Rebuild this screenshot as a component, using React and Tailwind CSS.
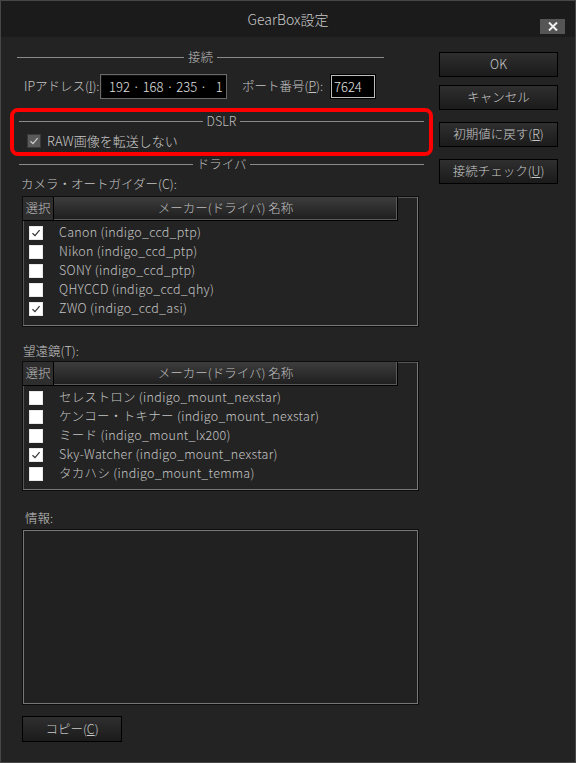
import React from "react";

const font = { fontFamily: '"Noto Sans CJK JP", "Noto Sans", sans-serif' };

const Heading = ({ label, className = "" }) => (
  <div className={`flex h-[16px] items-center ${className}`}>
    <div className="h-px flex-1 bg-[#8a8a8a]" />
    <span className="whitespace-nowrap px-[4px] text-[12.5px] font-light leading-none text-[#bdbdbd]">{label}</span>
    <div className="h-px flex-1 bg-[#8a8a8a]" />
  </div>
);

const Check = ({ checked, disabled }) => (
  <div
    className={`flex h-[14px] w-[14px] shrink-0 items-center justify-center border ${
      disabled ? "border-[#3a3a3a] bg-[#5a5a5a]" : "border-[#e8e8e8] bg-white"
    }`}
  >
    {checked && (
      <svg width="10" height="10" viewBox="0 0 10 10">
        <path d="M1.5 5.2 L4 7.6 L8.6 2.2" fill="none" stroke={disabled ? "#cfcfcf" : "#333"} strokeWidth="1.2" />
      </svg>
    )}
  </div>
);

const Btn = ({ children, className = "" }) => (
  <div
    className={`flex h-[25px] items-center justify-center whitespace-nowrap border border-black bg-gradient-to-b from-[#2f2f2f] to-[#1b1b1b] text-[12.5px] font-light text-[#c8c8c8] ${className}`}
  >
    {children}
  </div>
);

const DriverTable = ({ rows, className = "" }) => (
  <div className={`ml-[21px] w-[397px] border border-[#0d0d0d] shadow-[inset_-1px_-1px_0_#777,inset_1px_1px_0_#555] ${className}`}>
    <div className="flex h-[24px]">
      <div className="flex w-[31px] items-center justify-center border-r border-b border-black bg-[#2e2e2e] text-[12.5px] font-light text-[#bdbdbd]">
        選択
      </div>
      <div className="flex w-[344px] items-center justify-center border-r border-b border-black bg-gradient-to-b from-[#3d3d3d] to-[#1e1e1e] text-[12.5px] font-light text-[#bdbdbd] shadow-[inset_-1px_-1px_0_#5a5a5a]">
        メーカー(ドライバ) 名称
      </div>
    </div>
    <div className="pt-[2px]">
      {rows.map((r) => (
        <div key={r.name} className="flex h-[19px] items-center pl-[6px]">
          <Check checked={r.checked} />
          <span className="ml-[16px] whitespace-nowrap text-[12.5px] font-light tracking-[0.3px] text-[#c4c4c4]">{r.name}</span>
        </div>
      ))}
    </div>
  </div>
);

const cameras = [
  { name: "Canon (indigo_ccd_ptp)", checked: true },
  { name: "Nikon (indigo_ccd_ptp)", checked: false },
  { name: "SONY (indigo_ccd_ptp)", checked: false },
  { name: "QHYCCD (indigo_ccd_qhy)", checked: false },
  { name: "ZWO (indigo_ccd_asi)", checked: true },
];

const mounts = [
  { name: "セレストロン (indigo_mount_nexstar)", checked: false },
  { name: "ケンコー・トキナー (indigo_mount_nexstar)", checked: false },
  { name: "ミード (indigo_mount_lx200)", checked: false },
  { name: "Sky-Watcher (indigo_mount_nexstar)", checked: true },
  { name: "タカハシ (indigo_mount_temma)", checked: false },
];

export default function App() {
  return (
    <div style={font} className="flex h-[763px] w-[576px] flex-col border border-[#474747] bg-[#232323] text-[#c4c4c4]">
      {/* title bar */}
      <div className="relative flex h-[36px] shrink-0 items-center justify-center bg-[#1b1b1b]">
        <span className="text-[14px] font-light text-[#c8c8c8]">GearBox設定</span>
        <div className="absolute right-[10px] top-[18px] flex h-[15px] w-[25px] items-center justify-center bg-[#555]">
          <svg width="10" height="9" viewBox="0 0 10 9">
            <path d="M1 0.5 L9 8.5 M9 0.5 L1 8.5" stroke="#f0f0f0" strokeWidth="2" />
          </svg>
        </div>
      </div>

      <div className="flex flex-1">
        {/* left column */}
        <div className="flex w-[438px] shrink-0 flex-col">
          <Heading label="接続" className="ml-[16px] mt-[12px] w-[367px]" />
          <div className="mt-[9px] flex h-[25px] items-center whitespace-nowrap text-[12.5px] font-light">
            <span className="ml-[23px] w-[76px]">
              IPアドレス(<u>I</u>):
            </span>
            <div className="flex h-[25px] w-[127px] shrink-0 items-center whitespace-pre border border-[#6a6a6a] bg-black pl-[8px] text-[13px] text-[#e0e0e0] shadow-[inset_1px_1px_0_#111]">
              {"192 · 168 · 235 ·   1"}
            </div>
            <span className="ml-[15px] w-[88px]">
              ポート番号(<u>P</u>):
            </span>
            <div className="flex h-[25px] w-[46px] shrink-0 items-center border border-black bg-black pl-[3px] text-[13px] text-[#e0e0e0] shadow-[inset_0_0_0_1px_#bdbdbd]">
              7624
            </div>
          </div>

          {/* annotated DSLR section */}
          <div className="ml-[9px] mt-[9px] w-[423px] rounded-[8px] border-[4px] border-[#ff0000] px-[5px] pb-[3px] pt-[1px]">
            <Heading label="DSLR" />
            <div className="mt-[4px] flex h-[16px] items-center pl-[8px]">
              <Check checked disabled />
              <span className="ml-[6px] whitespace-nowrap text-[13px] font-light text-[#c8c8c8]">RAW画像を転送しない</span>
            </div>
          </div>

          <Heading label="ドライバ" className="ml-[18px] w-[405px]" />
          <div className="ml-[20px] mt-[4px] h-[16px] text-[12.5px] font-light leading-[16px]">カメラ・オートガイダー(C):</div>
          <DriverTable rows={cameras} className="mt-[4px] h-[131px]" />

          <div className="ml-[22px] mt-[16px] h-[16px] text-[12.5px] font-light leading-[16px]">望遠鏡(T):</div>
          <DriverTable rows={mounts} className="mt-[2px] h-[130px]" />

          <div className="ml-[24px] mt-[19px] h-[16px] text-[12.5px] font-light leading-[16px]">情報:</div>
          <div className="ml-[21px] mt-[3px] h-[176px] w-[397px] border border-[#0d0d0d] bg-[#212121] shadow-[inset_-1px_-1px_0_#777,inset_1px_1px_0_#777]" />

          <Btn className="ml-[21px] mt-[11px] h-[26px] w-[100px]">
            コピー(<u>C</u>)
          </Btn>
        </div>

        {/* right column */}
        <div className="flex w-[119px] flex-col pt-[15px]">
          <Btn className="w-[119px]">OK</Btn>
          <Btn className="mt-[8px] w-[119px]">キャンセル</Btn>
          <Btn className="mt-[12px] w-[119px]">
            初期値に戻す(<u>R</u>)
          </Btn>
          <Btn className="mt-[12px] w-[119px]">
            接続チェック(<u>U</u>)
          </Btn>
        </div>
      </div>
    </div>
  );
}
